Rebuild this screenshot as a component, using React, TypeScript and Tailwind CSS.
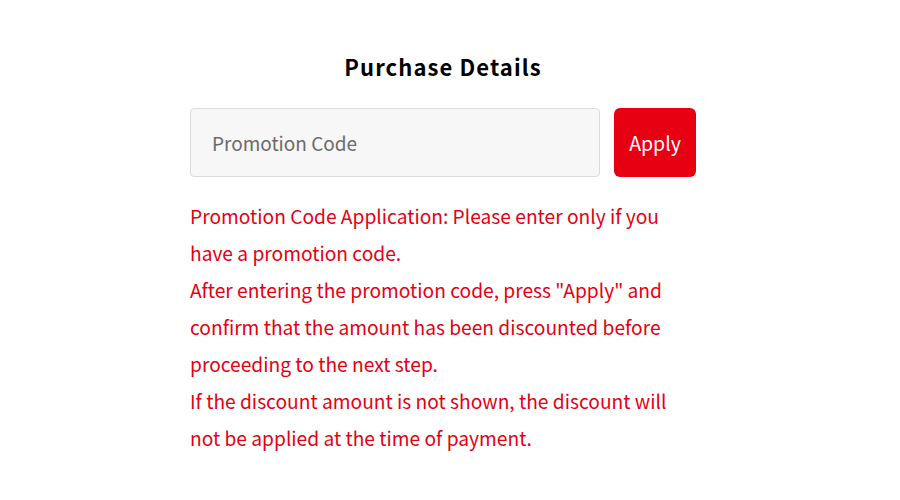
export default function App() {
  return (
    <div className="min-h-[500px] bg-white" style={{ fontFamily: '"Noto Sans CJK JP", "Noto Sans", sans-serif' }}>
      <div className="ml-[190px] w-[506px] pt-[50px]">
        <h2 className="text-center text-[22px] font-bold leading-[32px] tracking-[0.05em] text-black">Purchase Details</h2>
        <div className="mt-[26px] flex gap-[14px]">
          <input
            type="text"
            placeholder="Promotion Code"
            className="h-[69px] w-[410px] rounded-[4px] border-[1.5px] border-[#dcdcdc] bg-[#f7f7f7] px-[21px] text-[19px] text-[#333] placeholder:text-[#6b6b6b] outline-none"
          />
          <button type="button" className="h-[69px] w-[82px] rounded-[6px] bg-[#e60012] text-[19.5px] text-white">Apply</button>
        </div>
        <div className="mt-[21px] w-[485px] text-[19.2px] leading-[37px] text-[#e60012]">
          <p>Promotion Code Application: Please enter only if you have a promotion code.</p>
          <p>After entering the promotion code, press "Apply" and confirm that the amount has been discounted before proceeding to the next step.</p>
          <p>If the discount amount is not shown, the discount will not be applied at the time of payment.</p>
        </div>
      </div>
    </div>
  );
}
